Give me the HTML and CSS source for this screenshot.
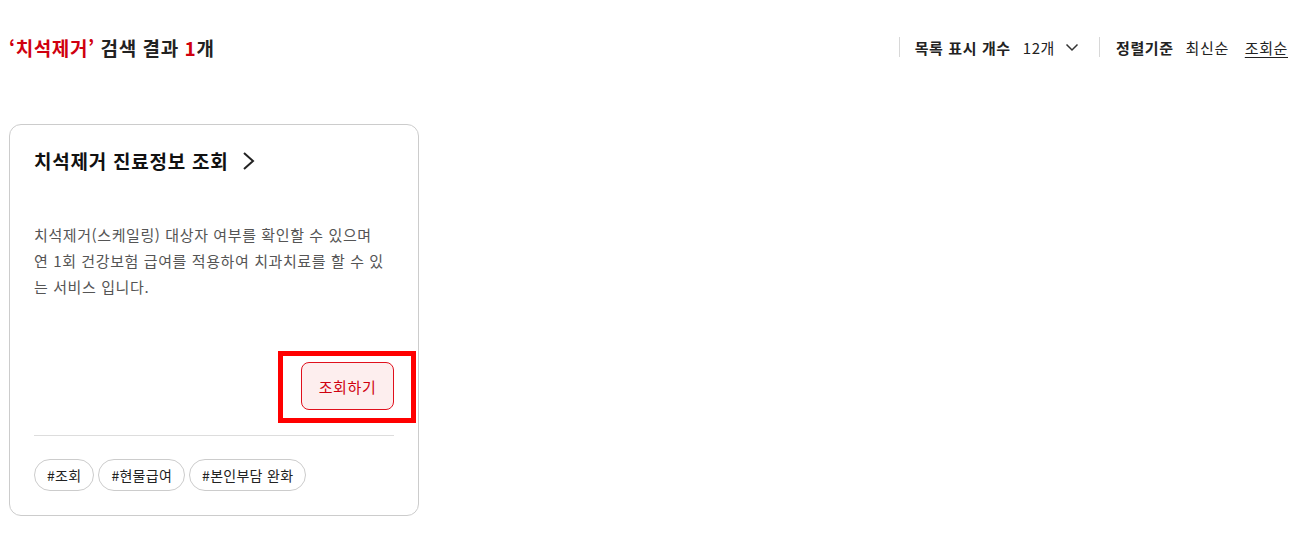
FILE: index.html
```html
<!DOCTYPE html>
<html lang="ko">
<head>
<meta charset="utf-8">
<link rel="stylesheet" href="styles.css">
</head>
<body>
<div class="page">
  <div class="head">
    <h2 class="result"><span class="kw">‘치석제거’</span> 검색 결과 <span class="num">1</span>개</h2>
    <div class="opts">
      <span class="sep"></span>
      <span class="lbl">목록 표시 개수</span>
      <span class="sel">12개
        <svg width="14" height="9" viewBox="0 0 14 9"><path d="M1.5 1.5 L7 7 L12.5 1.5" fill="none" stroke="#333" stroke-width="1.5"/></svg>
      </span>
      <span class="sep sep2"></span>
      <span class="lbl">정렬기준</span>
      <span class="sort">최신순</span>
      <span class="sort active">조회순</span>
    </div>
  </div>

  <div class="card">
    <div class="title">치석제거 진료정보 조회
      <svg width="14" height="20" viewBox="0 0 14 20"><path d="M2 2 L11 10 L2 18" fill="none" stroke="#222" stroke-width="2"/></svg>
    </div>
    <p class="desc">치석제거(스케일링) 대상자 여부를 확인할 수 있으며<br>연 1회 건강보험 급여를 적용하여 치과치료를 할 수 있<br>는 서비스 입니다.</p>
    <div class="actions">
      <span class="hl"></span>
      <button class="btn">조회하기</button>
    </div>
    <div class="tags">
      <span class="tag">#조회</span>
      <span class="tag">#현물급여</span>
      <span class="tag">#본인부담 완화</span>
    </div>
  </div>
</div>
</body>
</html>
```
FILE: styles.css
```css
* { box-sizing: border-box; }
body {
  margin: 0;
  background: #fff;
  font-family: "Noto Sans CJK KR", "Noto Sans", sans-serif;
  color: #222;
}
.page { padding: 0 9px; }
.head {
  display: flex;
  justify-content: space-between;
  align-items: center;
  height: 30px;
  margin-top: 32px;
}
.result {
  margin: 0;
  font-size: 19px;
  font-weight: 700;
  color: #222;
  letter-spacing: 0.03em;
}
.kw, .num { color: #d0000f; }
.opts {
  display: flex;
  align-items: center;
  font-size: 15px;
  color: #222;
  letter-spacing: 0.04em;
}
.sep {
  width: 1px;
  height: 20px;
  background: #d8d8d8;
  margin-right: 15px;
}
.sep2 { margin-left: 20px; margin-right: 16px; }
.lbl { font-weight: 700; margin-right: 12px; }
.sel { display: flex; align-items: center; gap: 10px; }
.sort { margin-right: 16px; }
.sort:last-child { margin-right: 0; }
.sort.active { text-decoration: underline; text-underline-offset: 3px; }

.card {
  margin-top: 62px;
  width: 410px;
  border: 1px solid #ccc;
  border-radius: 12px;
  padding: 22px 24px 24px;
}
.title {
  display: flex;
  align-items: center;
  gap: 13px;
  font-size: 19px;
  font-weight: 700;
  line-height: 28px;
  color: #111;
  letter-spacing: 0.04em;
}
.desc {
  margin: 47px 0 0;
  font-size: 15px;
  line-height: 26px;
  color: #555;
  letter-spacing: 0.04em;
  white-space: nowrap;
}
.actions {
  position: relative;
  display: flex;
  justify-content: flex-end;
  margin-top: 62px;
  padding-bottom: 25px;
  border-bottom: 1px solid #ddd;
}
.btn {
  width: 93px;
  height: 48px;
  border: 1px solid #e0101c;
  border-radius: 8px;
  background: #fdeeee;
  color: #d0000f;
  font-family: inherit;
  font-size: 15px;
  letter-spacing: 0.04em;
}
.hl {
  position: absolute;
  right: -22px;
  top: -11px;
  width: 138px;
  height: 72px;
  border: 5px solid #ff0000;
}
.tags {
  display: flex;
  gap: 4px;
  margin-top: 23px;
}
.tag {
  height: 32px;
  padding: 0 12px;
  border: 1px solid #ccc;
  border-radius: 16px;
  font-size: 14px;
  line-height: 30px;
  color: #222;
  letter-spacing: 0.02em;
}
```
